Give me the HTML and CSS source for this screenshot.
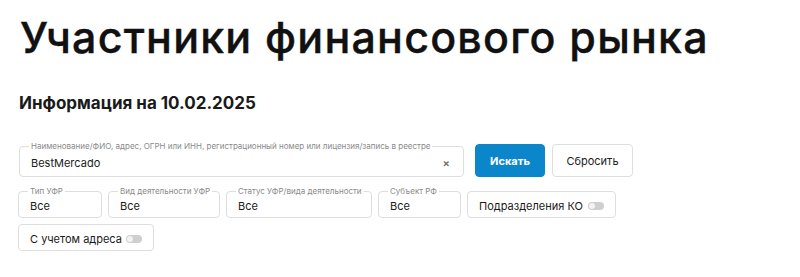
FILE: index.html
```html
<!DOCTYPE html>
<html lang="ru">
<head>
<meta charset="utf-8">
<link rel="stylesheet" href="styles.css">
</head>
<body>
<div class="page">
  <h1 class="title">Участники финансового рынка</h1>
  <h2 class="subtitle">Информация на 10.02.2025</h2>
  <div class="row row-search">
    <div class="field field-search">
      <span class="legend">Наименование/ФИО, адрес, ОГРН или ИНН, регистрационный номер или лицензия/запись в реестре</span>
      <span class="value">BestMercado</span>
      <span class="clear">×</span>
    </div>
    <button class="btn btn-primary">Искать</button>
    <button class="btn btn-secondary">Сбросить</button>
  </div>
  <div class="row row-filters">
    <div class="field field-sm w-type"><span class="legend">Тип УФР</span><span class="value">Все</span></div>
    <div class="field field-sm w-kind"><span class="legend">Вид деятельности УФР</span><span class="value">Все</span></div>
    <div class="field field-sm w-status"><span class="legend">Статус УФР/вида деятельности</span><span class="value">Все</span></div>
    <div class="field field-sm w-region"><span class="legend">Субъект РФ</span><span class="value">Все</span></div>
    <div class="field field-sm w-ko"><span class="value">Подразделения КО</span><span class="toggle"></span></div>
    <div class="field field-sm w-addr"><span class="value">С учетом адреса</span><span class="toggle"></span></div>
  </div>
</div>
</body>
</html>
```
FILE: styles.css
```css
* { box-sizing: border-box; }
body {
  margin: 0;
  background: #fff;
  font-family: Inter, "Noto Sans", sans-serif;
  color: #111;
}
.page {
  padding: 12px 0 0 18px;
}
.title {
  margin: 0 0 0 2px;
  font-size: 43px;
  line-height: 50px;
  font-weight: 500;
  letter-spacing: 1.2px;
  color: #111;
  -webkit-text-stroke: 0.4px #111;
}
.subtitle {
  margin: 30px 0 0 1px;
  font-size: 17px;
  line-height: 22px;
  font-weight: 700;
  color: #1a1a1a;
}
.row {
  display: flex;
  align-items: flex-end;
}
.row-search {
  margin-top: 30px;
  height: 33px;
}
.field {
  position: relative;
  display: flex;
  align-items: center;
  border: 1px solid #dedede;
  border-radius: 4px;
  padding: 0 11px;
  background: #fff;
}
.legend {
  position: absolute;
  left: 9px;
  top: -6px;
  padding: 0 2px;
  background: #fff;
  color: #8a8a8a;
  font-size: 8px;
  line-height: 10px;
  white-space: nowrap;
}
.value {
  font-size: 11px;
  color: #1a1a1a;
  white-space: nowrap;
}
.field-search {
  width: 445px;
  height: 31px;
  margin-left: 1px;
  padding-top: 2px;
}
.clear {
  margin-left: auto;
  margin-right: 2px;
  font-size: 11px;
  font-weight: 600;
  color: #6f6f6f;
}
.btn {
  height: 33px;
  border-radius: 4px;
  font-family: inherit;
  font-size: 11px;
  cursor: pointer;
}
.btn-primary {
  margin-left: 11px;
  width: 70px;
  background: #0c86cb;
  border: 1px solid #0c86cb;
  color: #fff;
  font-weight: 700;
}
.btn-secondary {
  margin-left: 7px;
  width: 81px;
  background: #fff;
  border: 1px solid #dedede;
  color: #222;
}
.row-filters {
  margin-top: 14px;
  flex-wrap: wrap;
  gap: 6px 6px;
  width: 620px;
}
.field-sm {
  height: 27px;
  padding-top: 2px;
}
.w-type { width: 84px; }
.w-kind { width: 112px; }
.w-status { width: 146px; }
.w-region { width: 83px; }
.w-ko { width: 149px; }
.w-addr { width: 136px; }
.toggle {
  position: relative;
  margin-left: auto;
  margin-right: 0;
  width: 16px;
  height: 8px;
  border-radius: 4px;
  background: #cfcfd2;
}
.toggle::after {
  content: "";
  position: absolute;
  left: 1px;
  top: 1px;
  width: 6px;
  height: 6px;
  border-radius: 50%;
  background: #f3f3f3;
}
```
